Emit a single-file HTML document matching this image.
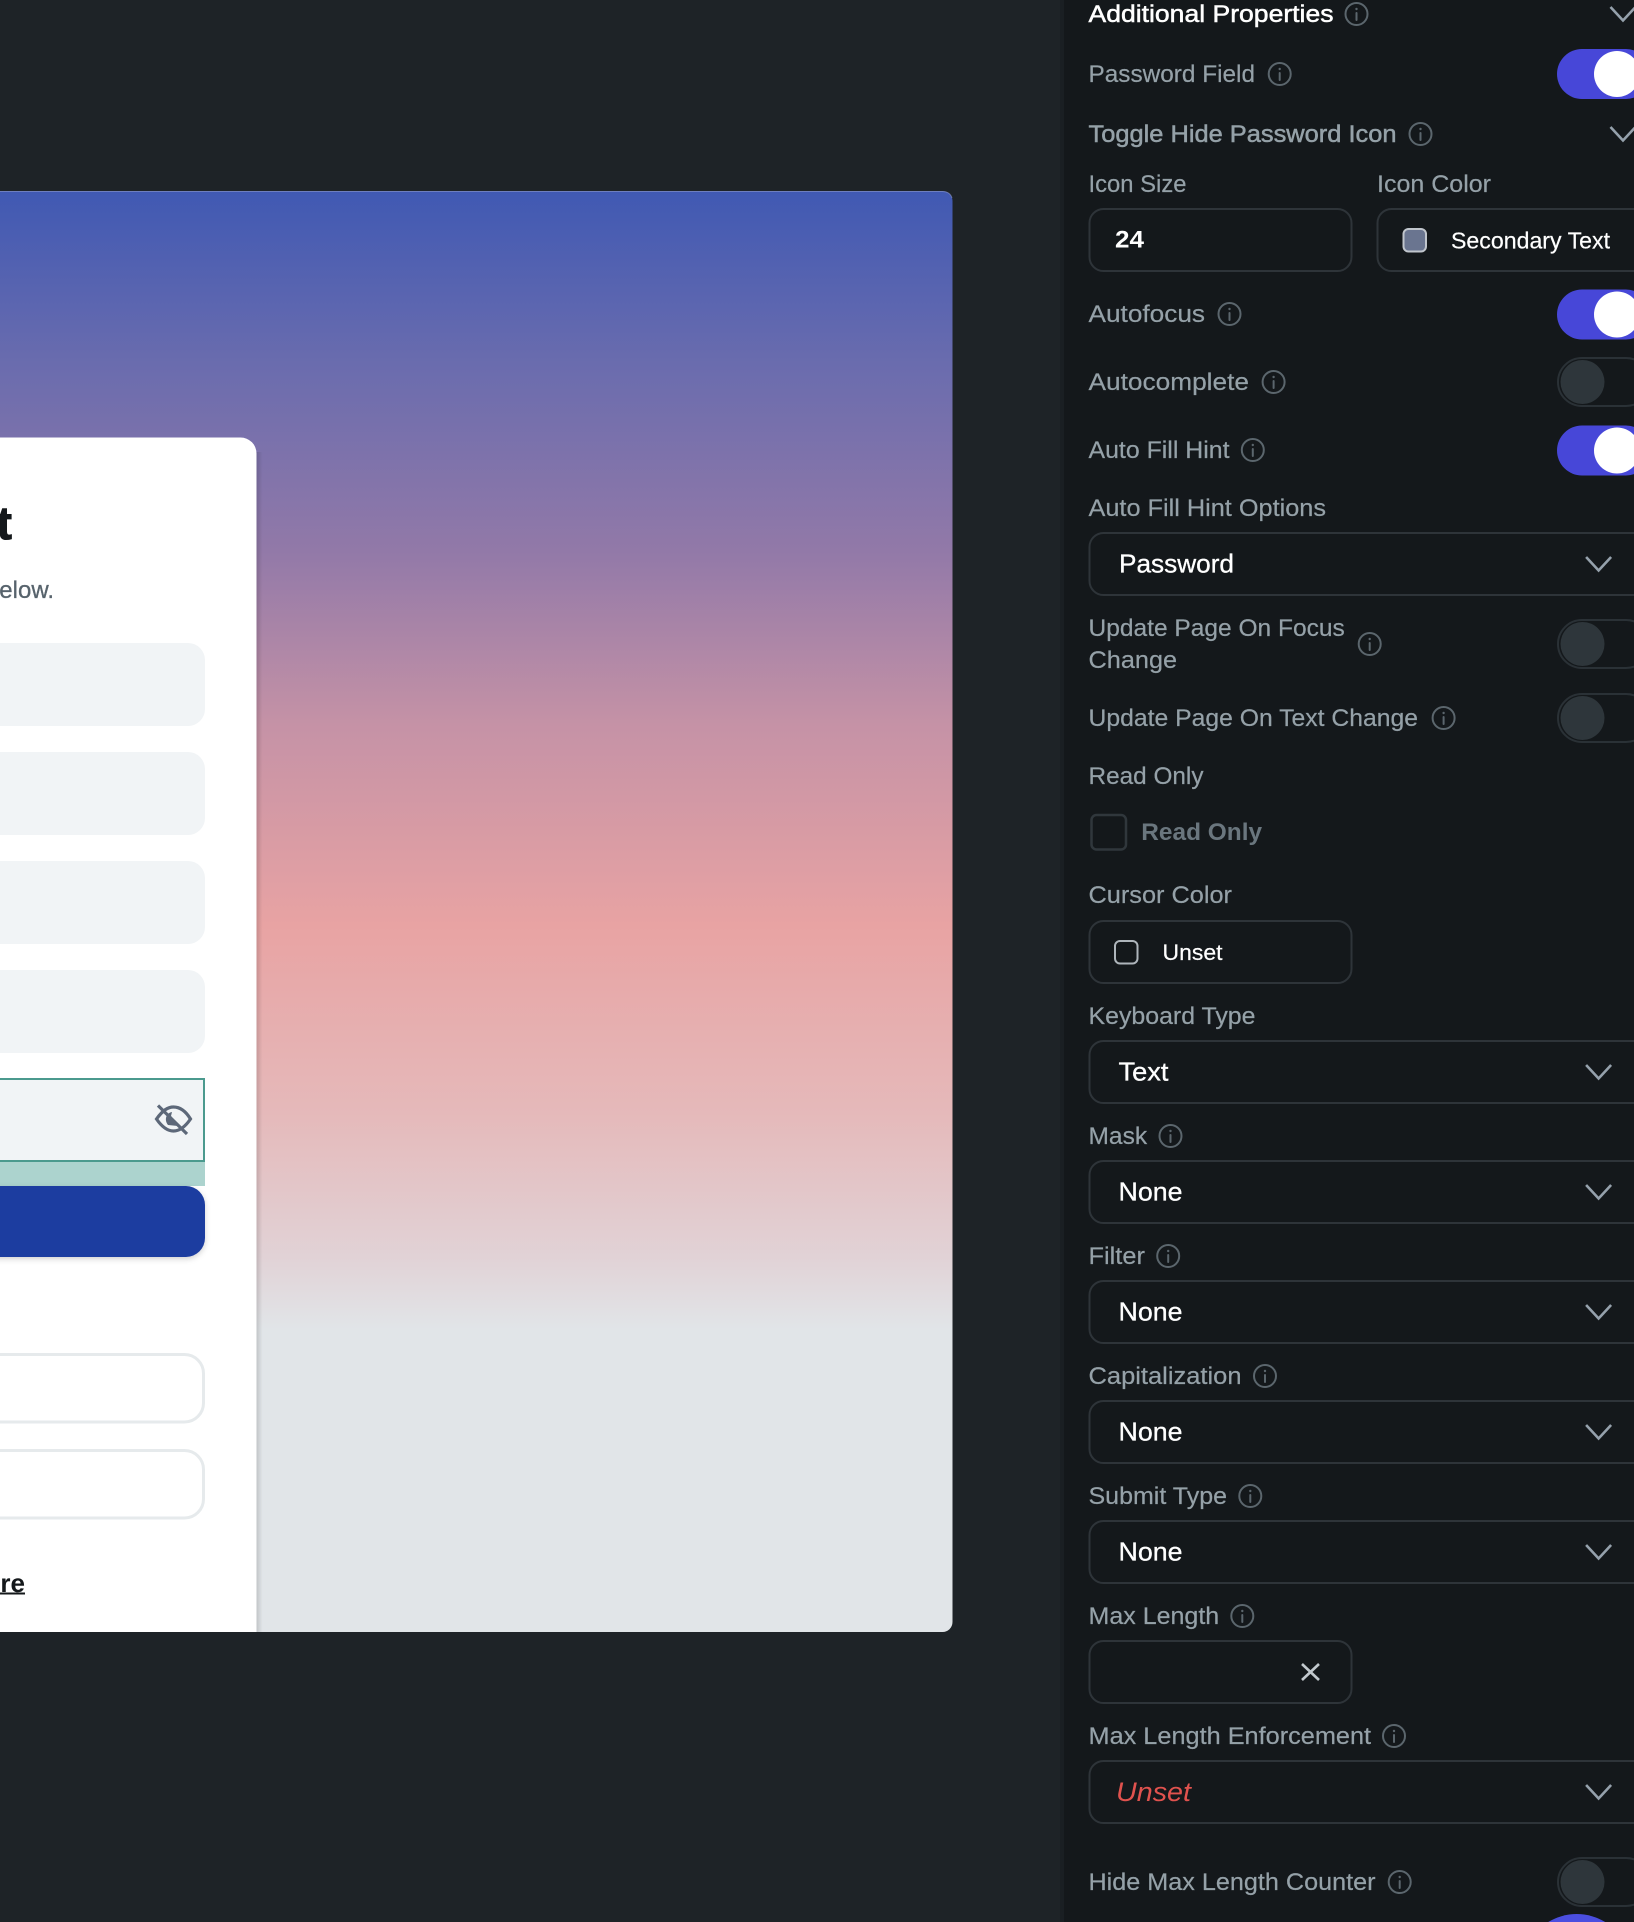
<!DOCTYPE html>
<html lang="en"><head><meta charset="utf-8"><title>Password Field Properties</title>
<style>
html,body{margin:0;padding:0;background:#1e2327;overflow:hidden}
html{width:1634px;height:1922px}
body{width:1634px;height:1922px}
svg{display:block}
text{font-family:"Liberation Sans",sans-serif}
.l{font-size:24.5px;fill:#95a1a8;stroke:#95a1a8;stroke-width:.2px}
.m{font-size:24.5px;fill:#95a1a8;stroke:#95a1a8;stroke-width:.5px}
.v{font-size:26px;fill:#fff;stroke:#fff;stroke-width:.3px}
.b{fill:#14181b;stroke:#2e3439;stroke-width:2}
</style></head><body>
<svg xmlns="http://www.w3.org/2000/svg" width="1634" height="1922" viewBox="0 0 1634 1922">
<defs>
<linearGradient id="hero" x1="0" y1="0" x2="0" y2="1">
<stop offset="0" stop-color="#4059b3"/><stop offset=".12" stop-color="#6a6cae"/><stop offset=".25" stop-color="#9279a8"/><stop offset=".37" stop-color="#c592a6"/><stop offset=".51" stop-color="#e8a3a3"/><stop offset=".64" stop-color="#e5b9ba"/><stop offset=".74" stop-color="#e1d2d6"/><stop offset=".79" stop-color="#e1e5e8"/><stop offset="1" stop-color="#e1e5e8"/>
</linearGradient>
<linearGradient id="sh" x1="0" y1="0" x2="1" y2="0"><stop offset="0" stop-color="#000" stop-opacity=".14"/><stop offset="1" stop-color="#000" stop-opacity="0"/></linearGradient>
<filter id="bs" x="-10%" y="-30%" width="120%" height="170%"><feDropShadow dx="0" dy="2" stdDeviation="3" flood-color="#000" flood-opacity=".18"/></filter>
<g id="i" fill="none" stroke="#5b666d" stroke-width="2"><circle r="11"/><path d="M0-1V6" stroke-linecap="round"/><circle cy="-5" r="1.2" fill="#5b666d" stroke="none"/></g>
<path id="c" d="M-12.5-7L0 6.5L12.5-7" fill="none" stroke="#95a1ac" stroke-width="2.6"/>
<g id="on"><rect x="1557" y="0" width="94" height="50" rx="25" fill="#4747d8"/><circle cx="1617" cy="25" r="23" fill="#fff"/></g>
<g id="off"><rect x="1558" y="1" width="92" height="48" rx="24" fill="#14181b" stroke="#2a3136" stroke-width="2"/><circle cx="1582.5" cy="25" r="22" fill="#2e363b"/></g>
</defs>

<rect width="1634" height="1922" fill="#1e2327"/>

<!-- hero -->
<rect x="-20" y="191" width="972.5" height="1441" rx="10" fill="url(#hero)"/>
<path d="M-20 191.5H942Q950 191.500 952 198" fill="none" stroke="#8c97c6" stroke-opacity=".6" stroke-width="1"/>
<!-- card -->
<rect x="-30" y="437.500" width="286.500" height="1240" rx="16" fill="#fff"/>
<rect x="256.500" y="452" width="6" height="1180" fill="url(#sh)"/>
<rect x="-20" y="1632" width="290" height="60" fill="#1e2327"/>

<text x="12" y="539" text-anchor="end" font-size="46" font-weight="700" fill="#14181b" stroke="#14181b" stroke-width="1">Create Account</text>
<text x="54" y="598" text-anchor="end" font-size="24" fill="#57636c" stroke="#57636c" stroke-width=".3">Let's get started by filling out the form below.</text>

<rect x="-30" y="643" width="235" height="83" rx="17" fill="#f1f4f6"/>
<rect x="-30" y="752" width="235" height="83" rx="17" fill="#f1f4f6"/>
<rect x="-30" y="861" width="235" height="83" rx="17" fill="#f1f4f6"/>
<rect x="-30" y="970" width="235" height="83" rx="17" fill="#f1f4f6"/>

<rect x="-30" y="1161" width="235" height="25" fill="#acd3ce"/>
<rect x="-30" y="1078" width="235" height="84" fill="#4b9a8e"/>
<rect x="-30" y="1080" width="233" height="80" fill="#f1f4f6"/>
<g fill="none" stroke="#5d6879" stroke-width="3.2">
<path d="M156.5 1119C163 1110 168 1107 173.500 1107C179 1107 185 1110 190.500 1119C185 1127 179 1131 173.500 1131C168 1131 162 1127 156.500 1119Z"/>
<path d="M158 1105.500L187 1134"/>
</g>
<path d="M172 1112C166 1113 164 1120 168 1125L178 1126L171 1116Z" fill="#5d6879"/>
<rect x="-30" y="1186" width="235" height="71" rx="19" fill="#1f3da0" filter="url(#bs)"/>

<rect x="-30" y="1354.500" width="233.500" height="67.500" rx="19" fill="#fff" stroke="#e6eaec" stroke-width="3"/>
<rect x="-30" y="1450.500" width="233.500" height="67.500" rx="19" fill="#fff" stroke="#e6eaec" stroke-width="3"/>

<text x="25" y="1592" text-anchor="end" font-size="26" font-weight="700" fill="#14181b">here</text>
<rect x="-2" y="1592.500" width="27" height="2" fill="#14181b"/>

<!-- right panel -->
<rect x="1064" y="0" width="570" height="1922" fill="#14181b"/>
<rect x="1060" y="0" width="4" height="1922" fill="#1a1f23"/>

<text x="1088.500" y="22" font-size="24.500" fill="#fff" stroke="#fff" stroke-width=".5" textLength="245" lengthAdjust="spacingAndGlyphs">Additional Properties</text>
<use href="#i" x="1356.500" y="14"/>
<use href="#c" x="1623" y="14"/>

<text class="l" x="1088.500" y="82" textLength="166.500" lengthAdjust="spacingAndGlyphs">Password Field</text>
<use href="#i" x="1279.700" y="74"/>
<use href="#on" y="49"/>

<text class="m" x="1088.500" y="142" textLength="308" lengthAdjust="spacingAndGlyphs">Toggle Hide Password Icon</text>
<use href="#i" x="1420.500" y="134"/>
<use href="#c" x="1623" y="134"/>

<text class="l" x="1088.500" y="192" textLength="98" lengthAdjust="spacingAndGlyphs">Icon Size</text>
<text class="l" x="1377" y="192" textLength="114" lengthAdjust="spacingAndGlyphs">Icon Color</text>
<rect class="b" x="1089.500" y="209" width="262" height="62" rx="14"/>
<rect class="b" x="1377.500" y="209" width="290" height="62" rx="14"/>
<text x="1115" y="247.500" font-size="24" font-weight="700" fill="#fff" textLength="29" lengthAdjust="spacingAndGlyphs">24</text>
<rect x="1403.500" y="229" width="22.500" height="22.500" rx="5" fill="#6a7590" stroke="#c0c5cc" stroke-width="2"/>
<text x="1451" y="248.500" font-size="23" fill="#fff" stroke="#fff" stroke-width=".2" textLength="159" lengthAdjust="spacingAndGlyphs">Secondary Text</text>

<text class="l" x="1088.500" y="322" textLength="116.500" lengthAdjust="spacingAndGlyphs">Autofocus</text>
<use href="#i" x="1229.500" y="314"/>
<use href="#on" y="289.500"/>

<text class="l" x="1088.500" y="390" textLength="160.500" lengthAdjust="spacingAndGlyphs">Autocomplete</text>
<use href="#i" x="1273.600" y="382"/>
<use href="#off" y="357"/>

<text class="l" x="1088.500" y="458" textLength="141" lengthAdjust="spacingAndGlyphs">Auto Fill Hint</text>
<use href="#i" x="1252.800" y="450"/>
<use href="#on" y="425.500"/>

<text class="l" x="1088.500" y="516" textLength="237.500" lengthAdjust="spacingAndGlyphs">Auto Fill Hint Options</text>
<rect class="b" x="1089.500" y="533" width="580" height="62" rx="14"/>
<text class="v" x="1119" y="572.500" textLength="115" lengthAdjust="spacingAndGlyphs">Password</text>
<use href="#c" x="1598.600" y="564"/>

<text class="l" x="1088.500" y="636" textLength="256.300" lengthAdjust="spacingAndGlyphs">Update Page On Focus</text>
<text class="l" x="1088.500" y="668" textLength="88.600" lengthAdjust="spacingAndGlyphs">Change</text>
<use href="#i" x="1369.700" y="644"/>
<use href="#off" y="619"/>

<text class="l" x="1088.500" y="726" textLength="329.500" lengthAdjust="spacingAndGlyphs">Update Page On Text Change</text>
<use href="#i" x="1443.600" y="718"/>
<use href="#off" y="693"/>

<text class="l" x="1088.500" y="784" textLength="115" lengthAdjust="spacingAndGlyphs">Read Only</text>
<rect x="1091.500" y="815" width="34.500" height="34.500" rx="5" fill="none" stroke="#30373c" stroke-width="2.500"/>
<text x="1141.300" y="840" font-size="24" font-weight="700" fill="#6a767e" textLength="120.800" lengthAdjust="spacingAndGlyphs">Read Only</text>

<text class="l" x="1088.500" y="903" textLength="143.500" lengthAdjust="spacingAndGlyphs">Cursor Color</text>
<rect class="b" x="1089.500" y="921" width="262" height="62" rx="14"/>
<rect x="1115" y="941" width="22.500" height="22.500" rx="5" fill="#14181b" stroke="#aeb5bb" stroke-width="2"/>
<text x="1162.500" y="960" font-size="22" fill="#fff" stroke="#fff" stroke-width=".2" textLength="60" lengthAdjust="spacingAndGlyphs">Unset</text>

<text class="l" x="1088.500" y="1024" textLength="167" lengthAdjust="spacingAndGlyphs">Keyboard Type</text>
<rect class="b" x="1089.500" y="1041" width="580" height="62" rx="14"/>
<text class="v" x="1118.500" y="1080.500" textLength="50" lengthAdjust="spacingAndGlyphs">Text</text>
<use href="#c" x="1598.600" y="1072"/>

<text class="l" x="1088.500" y="1144" textLength="58.600" lengthAdjust="spacingAndGlyphs">Mask</text>
<use href="#i" x="1170.500" y="1136"/>
<rect class="b" x="1089.500" y="1161" width="580" height="62" rx="14"/>
<text class="v" x="1118.500" y="1200.500" textLength="64" lengthAdjust="spacingAndGlyphs">None</text>
<use href="#c" x="1598.600" y="1192"/>

<text class="l" x="1088.500" y="1264" textLength="56.400" lengthAdjust="spacingAndGlyphs">Filter</text>
<use href="#i" x="1168.200" y="1256"/>
<rect class="b" x="1089.500" y="1281" width="580" height="62" rx="14"/>
<text class="v" x="1118.500" y="1320.500" textLength="64" lengthAdjust="spacingAndGlyphs">None</text>
<use href="#c" x="1598.600" y="1312"/>

<text class="l" x="1088.500" y="1384" textLength="153" lengthAdjust="spacingAndGlyphs">Capitalization</text>
<use href="#i" x="1265" y="1376"/>
<rect class="b" x="1089.500" y="1401" width="580" height="62" rx="14"/>
<text class="v" x="1118.500" y="1440.500" textLength="64" lengthAdjust="spacingAndGlyphs">None</text>
<use href="#c" x="1598.600" y="1432"/>

<text class="l" x="1088.500" y="1504" textLength="138.500" lengthAdjust="spacingAndGlyphs">Submit Type</text>
<use href="#i" x="1250.300" y="1496"/>
<rect class="b" x="1089.500" y="1521" width="580" height="62" rx="14"/>
<text class="v" x="1118.500" y="1560.500" textLength="64" lengthAdjust="spacingAndGlyphs">None</text>
<use href="#c" x="1598.600" y="1552"/>

<text class="l" x="1088.500" y="1624" textLength="130.700" lengthAdjust="spacingAndGlyphs">Max Length</text>
<use href="#i" x="1242.300" y="1616"/>
<rect class="b" x="1089.500" y="1641" width="262" height="62" rx="14"/>
<path d="M1302 1664L1319 1680M1319 1664L1302 1680" stroke="#c2c9ce" stroke-width="2.600" fill="none"/>

<text class="l" x="1088.500" y="1744" textLength="282.600" lengthAdjust="spacingAndGlyphs">Max Length Enforcement</text>
<use href="#i" x="1394" y="1736"/>
<rect class="b" x="1089.500" y="1761" width="580" height="62" rx="14"/>
<text x="1116" y="1801" font-size="27" font-style="italic" fill="#e0524e" textLength="75" lengthAdjust="spacingAndGlyphs">Unset</text>
<use href="#c" x="1598.600" y="1792"/>

<text class="l" x="1088.500" y="1890" textLength="287" lengthAdjust="spacingAndGlyphs">Hide Max Length Counter</text>
<use href="#i" x="1399.700" y="1882"/>
<use href="#off" y="1857"/>

<path d="M1548.200 1922A55 55 0 0 1 1605.200 1922Z" fill="#4b4ee0"/>
</svg>
</body></html>
